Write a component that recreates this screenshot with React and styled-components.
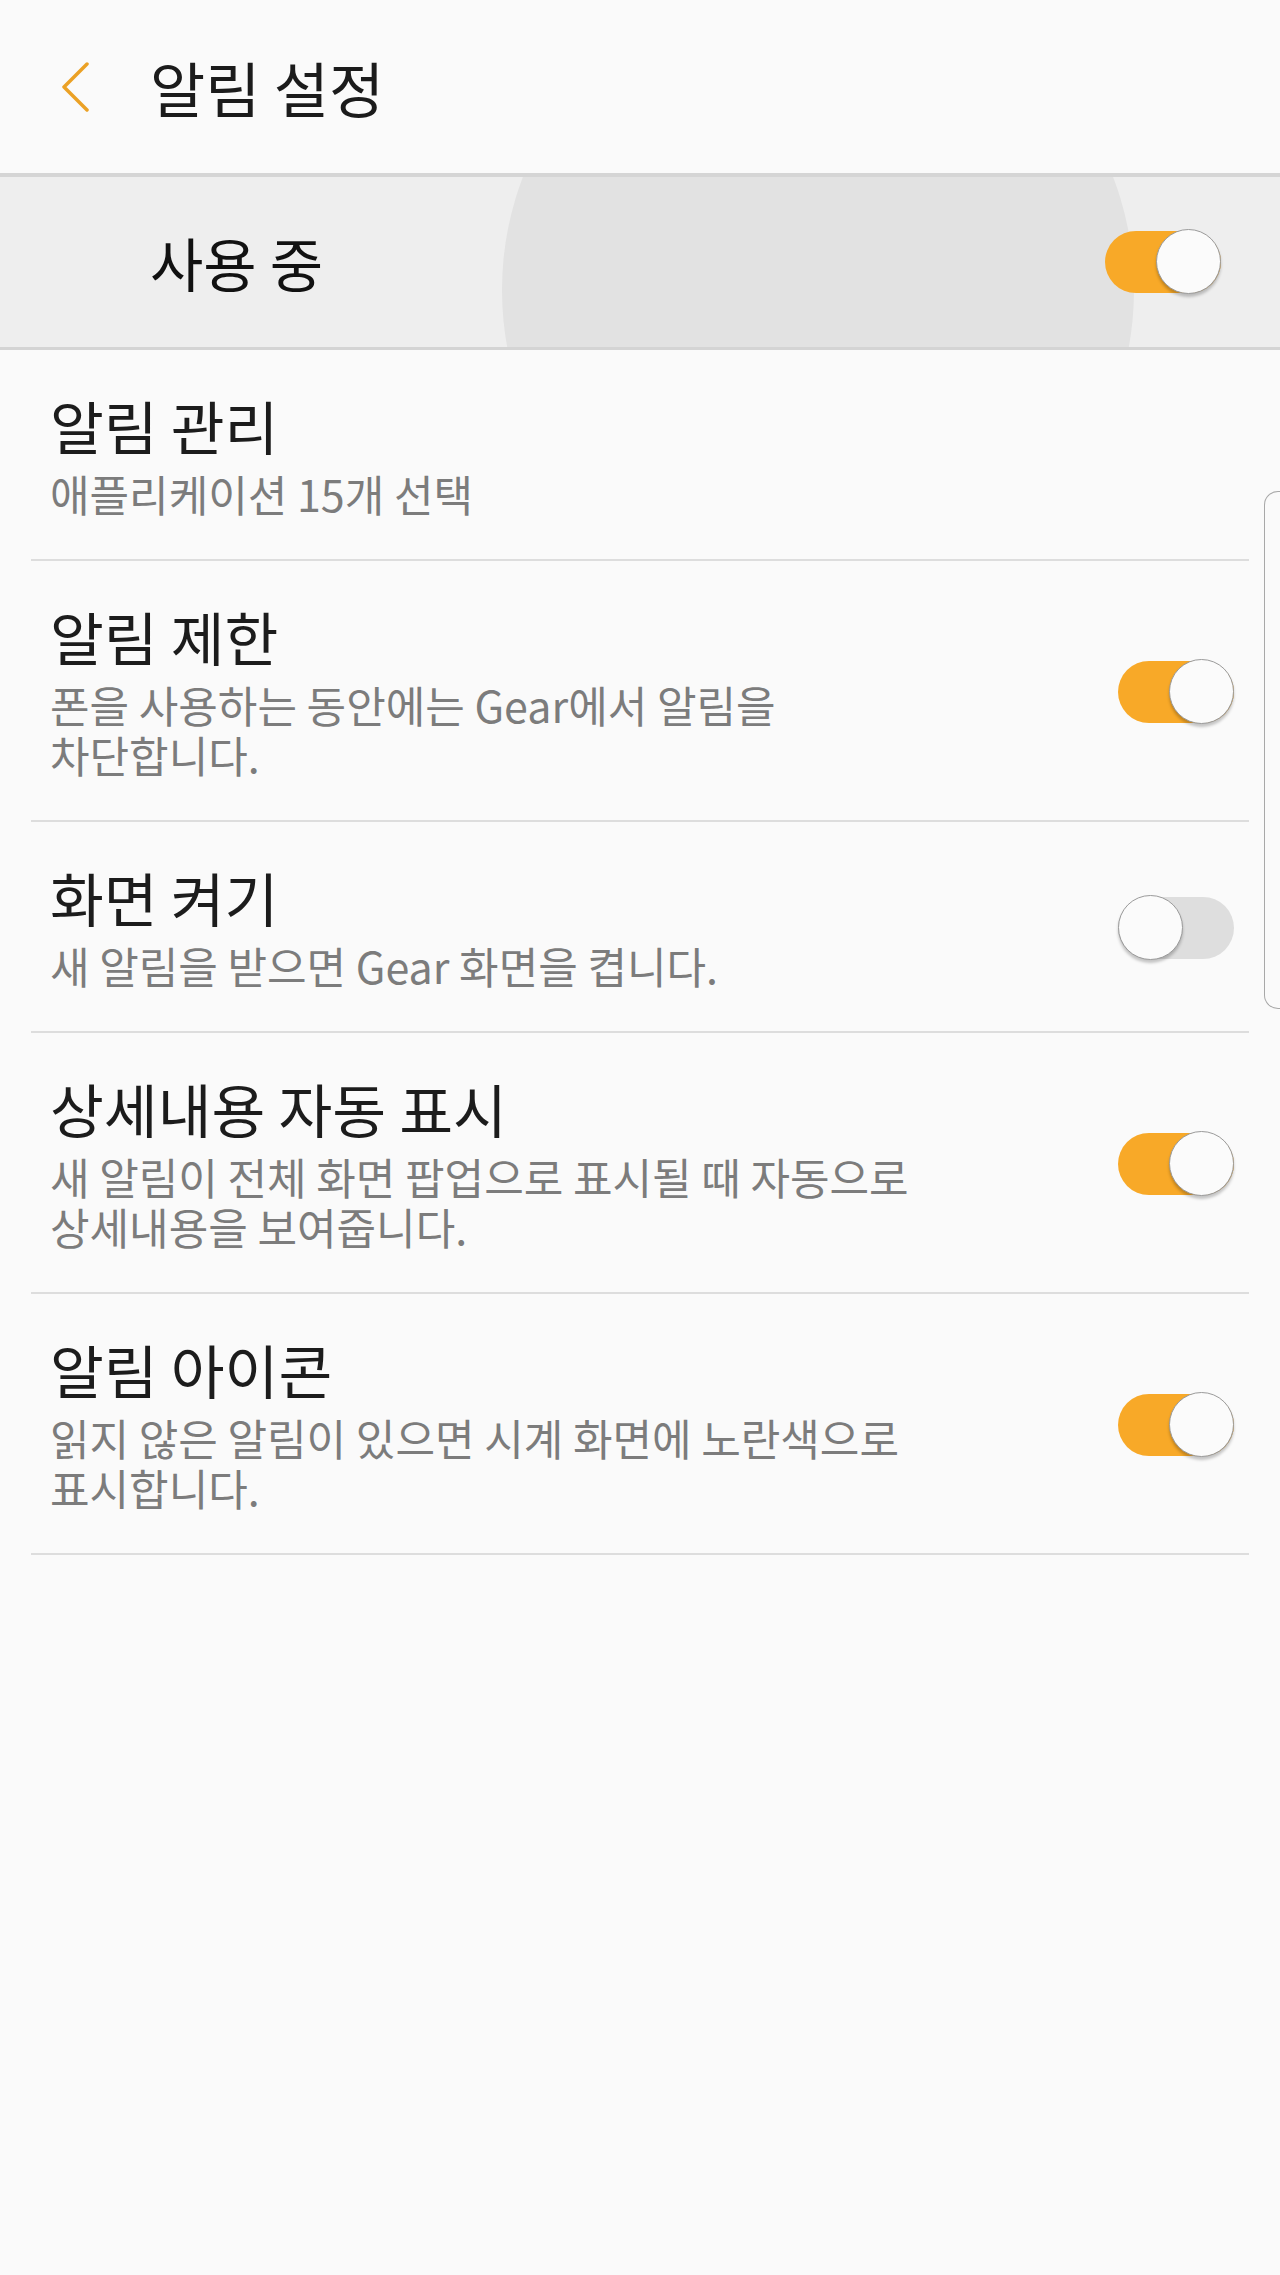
import React from "react";
import styled, { createGlobalStyle } from "styled-components";

const GlobalStyle = createGlobalStyle`
  html, body {
    margin: 0;
    padding: 0;
    background: #fafafa;
  }
  body {
    font-family: "Noto Sans CJK KR", "Noto Sans", sans-serif;
  }
`;

const Page = styled.div`
  position: relative;
  width: 1280px;
  min-height: 2275px;
  background: #fafafa;
  overflow: hidden;
`;

const Header = styled.header`
  display: flex;
  align-items: center;
  height: 173px;
  padding-left: 61px;
  gap: 61px;
  border-bottom: 4px solid #d5d5d5;
`;

const BackButton = styled.button`
  display: flex;
  align-items: center;
  padding: 0;
  border: 0;
  background: none;
  width: 28px;
  height: 50px;
`;

const HeaderTitle = styled.h1`
  margin: 0;
  font-size: 60px;
  line-height: 64px;
  font-weight: 400;
  color: #1b1b1b;
`;

const MasterBar = styled.div`
  position: relative;
  display: flex;
  align-items: center;
  justify-content: space-between;
  height: 170px;
  padding: 0 59px 0 150px;
  background: #eeeeee;
  border-bottom: 3px solid #d4d4d4;
  overflow: hidden;
`;

const Ripple = styled.span`
  position: absolute;
  left: 502px;
  top: -203px;
  width: 632px;
  height: 632px;
  border-radius: 50%;
  background: #e2e2e2;
`;

const MasterLabel = styled.span`
  position: relative;
  font-size: 58px;
  line-height: 64px;
  color: #111;
`;

const List = styled.ul`
  list-style: none;
  margin: 0 31px;
  padding: 0;
`;

const Item = styled.li`
  display: flex;
  align-items: center;
  justify-content: space-between;
  padding: 43px 15px 41px 19px;
  border-bottom: 2px solid #dddddd;
`;

const TextBlock = styled.div`
  display: flex;
  flex-direction: column;
  gap: 11px;
`;

const Title = styled.div`
  font-size: 58.5px;
  line-height: 64px;
  color: #1c1c1c;
`;

const Sub = styled.div`
  font-size: 43px;
  line-height: 50px;
  color: #7c7c7c;
  white-space: pre-line;
`;

const Track = styled.div`
  position: relative;
  flex: none;
  width: 116px;
  height: 62px;
  border-radius: 31px;
  background: ${(p) => (p.$on ? "#f8a928" : "#dedede")};
`;

const Knob = styled.span`
  position: absolute;
  top: -2px;
  left: ${(p) => (p.$on ? "51px" : "0")};
  width: 63px;
  height: 63px;
  border-radius: 50%;
  background: #fbfbfb;
  border: 1.5px solid #9b9b9b;
  box-shadow: 0 3px 3px rgba(0, 0, 0, 0.22);
`;

const EdgeHandle = styled.div`
  position: absolute;
  right: 0;
  top: 491px;
  width: 15px;
  height: 516px;
  border: 1.5px solid #a8a8a8;
  border-right: 0;
  border-radius: 14px 0 0 14px;
`;

function Switch({ on }) {
  return (
    <Track $on={on}>
      <Knob $on={on} />
    </Track>
  );
}

const items = [
  { title: "알림 관리", sub: "애플리케이션 15개 선택" },
  { title: "알림 제한", sub: "폰을 사용하는 동안에는 Gear에서 알림을\n차단합니다.", on: true },
  { title: "화면 켜기", sub: "새 알림을 받으면 Gear 화면을 켭니다.", on: false },
  { title: "상세내용 자동 표시", sub: "새 알림이 전체 화면 팝업으로 표시될 때 자동으로\n상세내용을 보여줍니다.", on: true },
  { title: "알림 아이콘", sub: "읽지 않은 알림이 있으면 시계 화면에 노란색으로\n표시합니다.", on: true },
];

export default function App() {
  return (
    <Page>
      <GlobalStyle />
      <Header>
        <BackButton aria-label="back">
          <svg width="28" height="50" viewBox="0 0 28 50">
            <polyline points="26,2 3,25 26,48" fill="none" stroke="#eba125" strokeWidth="3.5" strokeLinecap="round" strokeLinejoin="round" />
          </svg>
        </BackButton>
        <HeaderTitle>알림 설정</HeaderTitle>
      </Header>
      <MasterBar>
        <Ripple />
        <MasterLabel>사용 중</MasterLabel>
        <Switch on />
      </MasterBar>
      <List>
        {items.map((item) => (
          <Item key={item.title}>
            <TextBlock>
              <Title>{item.title}</Title>
              <Sub>{item.sub}</Sub>
            </TextBlock>
            {item.on !== undefined ? <Switch on={item.on} /> : null}
          </Item>
        ))}
      </List>
      <EdgeHandle />
    </Page>
  );
}
